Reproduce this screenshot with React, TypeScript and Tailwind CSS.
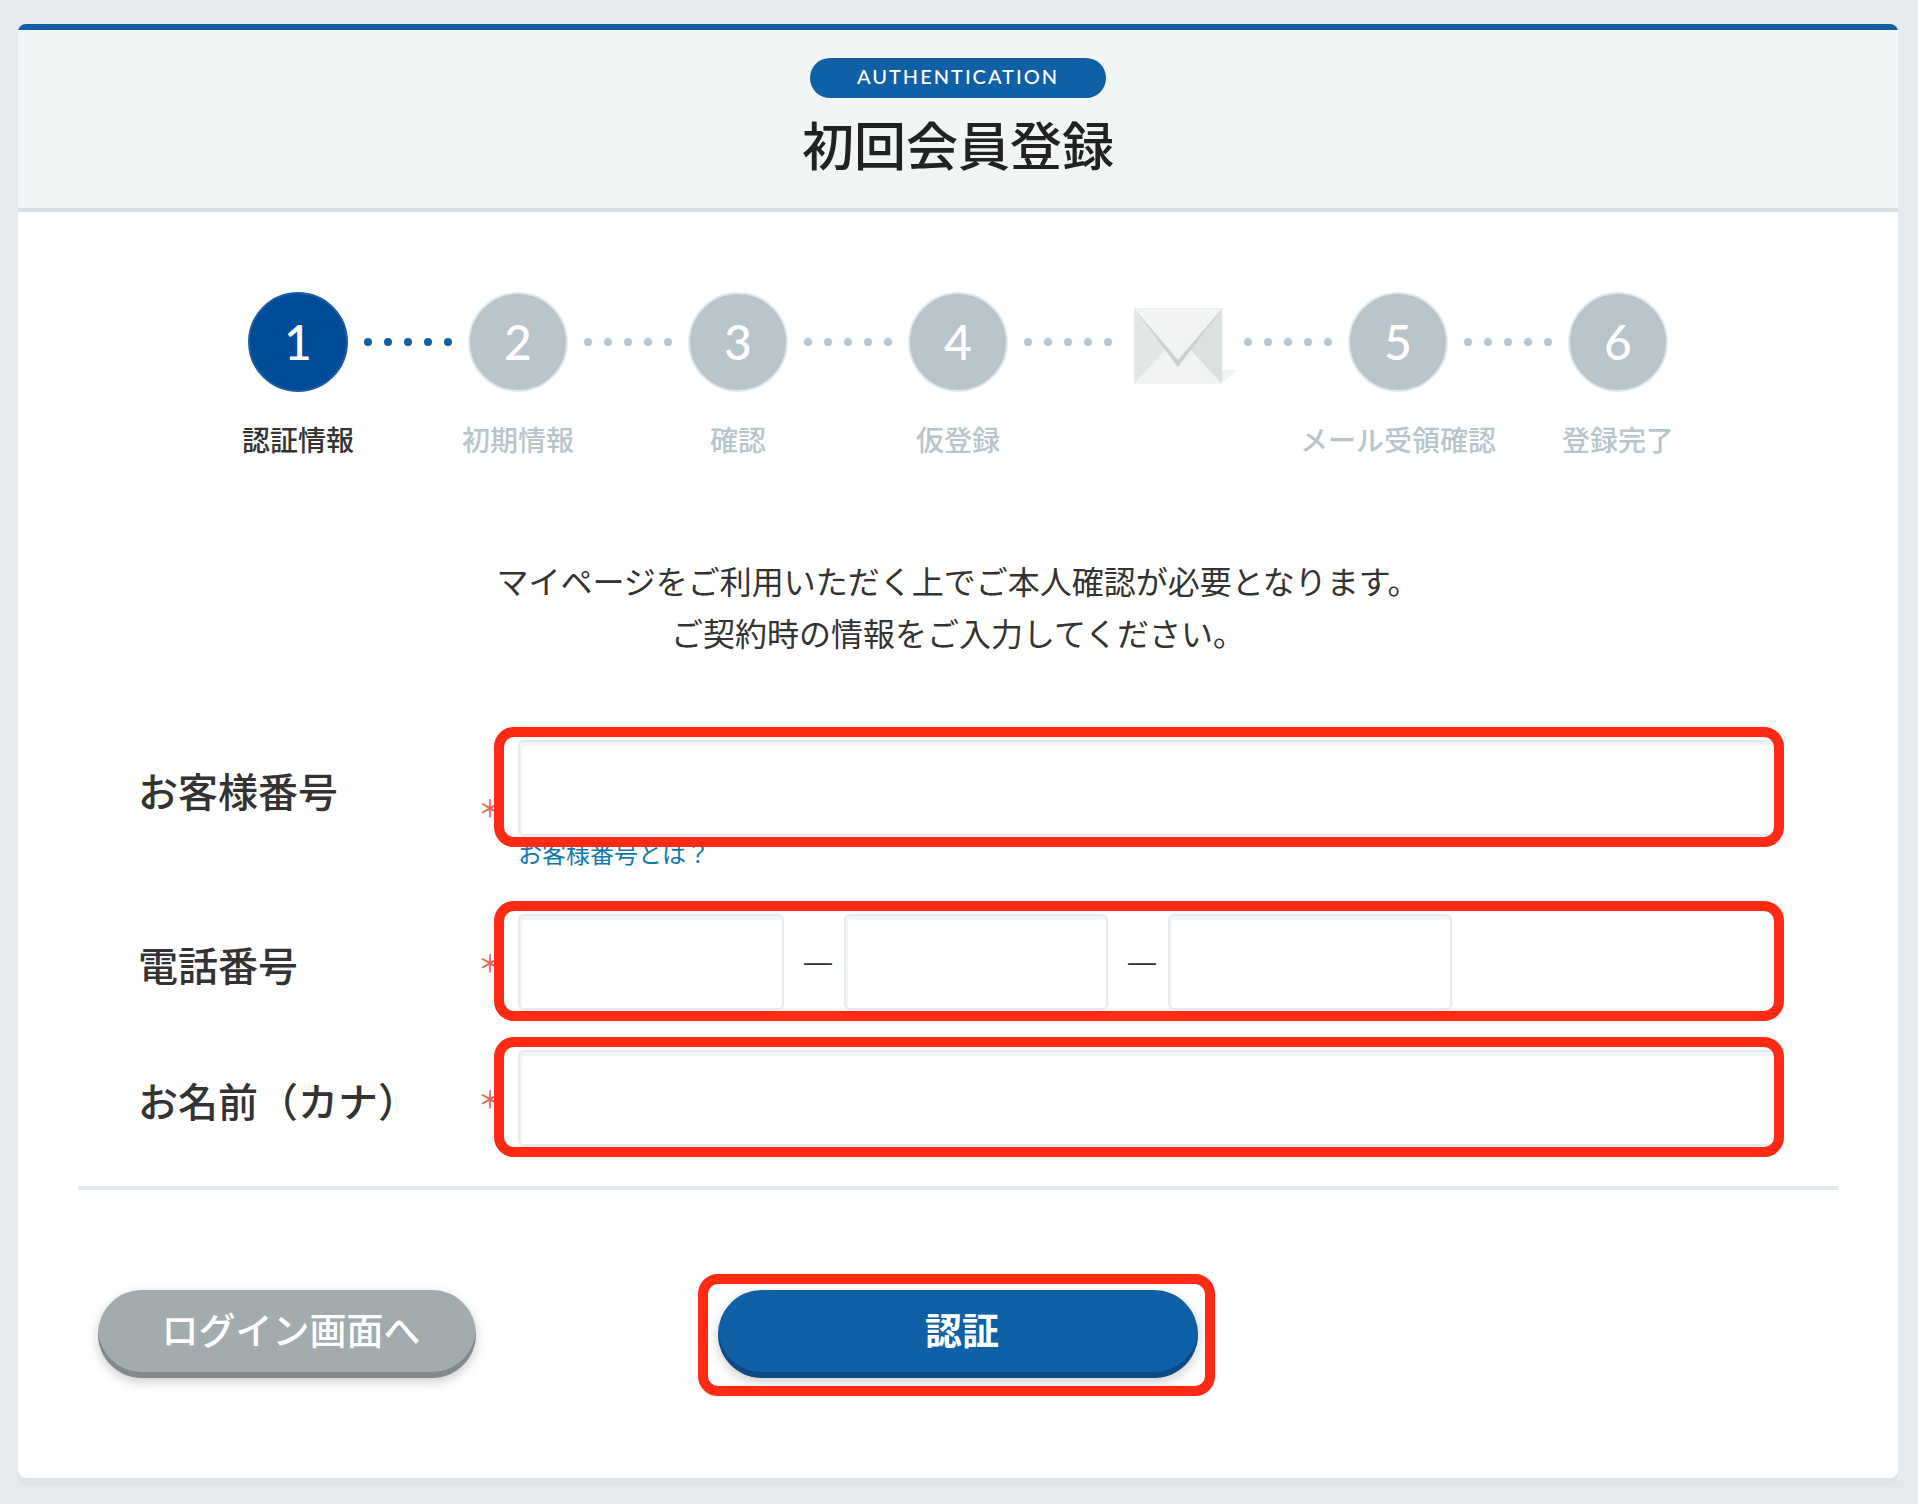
import { Fragment, type ReactNode } from "react";
import clsx from "clsx";

type Step = { num?: number; label?: string };

const steps: Step[] = [
  { num: 1, label: "認証情報" },
  { num: 2, label: "初期情報" },
  { num: 3, label: "確認" },
  { num: 4, label: "仮登録" },
  {}, // mail is sent between 4 and 5
  { num: 5, label: "メール受領確認" },
  { num: 6, label: "登録完了" },
];

const inputClass =
  "h-24 rounded-md border-2 border-[#e5eaee] bg-white px-5 text-[32px] shadow-[inset_2px_4px_0_#f3f5f7] outline-none";

function MailIcon() {
  return (
    <svg width="100" height="100" viewBox="0 0 100 100" className="overflow-visible" aria-hidden="true">
      <path d="M94 78h15L94 91z" fill="#f1f2f2" />
      <path d="M6 16.500 50 54 6 92z" fill="#e2e7e7" />
      <path d="M94 16.500 50 54 94 92z" fill="#dbe1e1" />
      <path d="M6 92 50 44 94 92z" fill="#f1f3f5" />
      <path d="M6 16.500 50 75 94 16.500z" fill="#cdd0d1" />
      <path d="M6 16.500 50 68 94 16.500z" fill="#f2f3f5" />
    </svg>
  );
}

function Dots({ active }: { active: boolean }) {
  return (
    <li aria-hidden="true" className="flex h-[100px] w-[120px] items-center justify-center gap-3">
      {[0, 1, 2, 3, 4].map((i) => (
        <span key={i} className={clsx("size-2 rounded-full", active ? "bg-[#1060a8]" : "bg-[#b4c6d3]")} />
      ))}
    </li>
  );
}

function StepItem({ step, current }: { step: Step; current: boolean }) {
  return (
    <li className="flex w-[100px] flex-col items-center" aria-current={current ? "step" : undefined}>
      {step.num ? (
        <span
          className={clsx(
            "flex size-[100px] items-center justify-center rounded-full border-2 font-[Lato,sans-serif] text-5xl font-medium text-white",
            current ? "border-[#1a5fa5] bg-[#004c98]" : "border-[#e2e9ec] bg-[#b8c5ca]"
          )}
        >
          {step.num}
        </span>
      ) : (
        <MailIcon />
      )}
      {step.label && (
        <span
          className={clsx(
            "mt-[26px] text-[28px] leading-[42px] font-medium whitespace-nowrap",
            current ? "text-[#333]" : "text-[#b8c5ca]"
          )}
        >
          {step.label}
        </span>
      )}
    </li>
  );
}

function Row({ id, label, note, children }: { id: string; label: string; note?: ReactNode; children: ReactNode }) {
  return (
    <div className="flex">
      <label htmlFor={id} className="flex h-24 w-[340px] items-center pt-1 text-[40px] leading-none font-medium">
        {label}
      </label>
      <span className="flex w-10 items-center text-2xl font-medium text-[#e8665c]">＊</span>
      <div className="flex-1">
        <div className="relative">
          {children}
          <div className="pointer-events-none absolute -top-[13px] -right-[6px] -bottom-[11px] -left-6 rounded-[20px] border-10 border-[#ff2a14]" />
        </div>
        {note}
      </div>
    </div>
  );
}

export default function App() {
  return (
    <div
      lang="ja"
      className="min-h-screen bg-[#e5eaee] pt-6 pr-5 pb-[26px] pl-[18px] font-['Noto_Sans_CJK_JP',sans-serif] text-[#333]"
    >
      <main className="overflow-hidden rounded-lg bg-white shadow-[0_8px_0_#e0e5e8]">
        <header className="flex flex-col items-center border-t-6 border-b-4 border-t-[#1060a8] border-b-[#d9dfe2] bg-[#f1f5f6] pt-7 pb-[26px]">
          <p className="flex h-10 w-[296px] items-center justify-center rounded-full bg-[#1060a8] pb-1 font-[Lato,sans-serif] text-xl font-medium tracking-[2px] text-white">
            AUTHENTICATION
          </p>
          <h1 className="mt-2 text-[52px] leading-[76px] font-medium text-[#222]">初回会員登録</h1>
        </header>

        <ol className="flex justify-center pt-20">
          {steps.map((step, i) => (
            <Fragment key={i}>
              {i > 0 && <Dots active={i === 1} />}
              <StepItem step={step} current={i === 0} />
            </Fragment>
          ))}
        </ol>

        <p className="mt-[94px] text-center text-[32px] leading-[52px]">
          マイページをご利用いただく上でご本人確認が必要となります。
          <br />
          ご契約時の情報をご入力してください。
        </p>

        <form className="mt-[82px]" onSubmit={(e) => e.preventDefault()}>
          <div className="mx-[60px] flex flex-col gap-10 border-b-4 border-[#e5eaee] px-[60px] pb-10">
            <Row
              id="customer-no"
              label="お客様番号"
              note={
                <a href="#customer-no" className="block pb-1 text-2xl leading-[34px] text-[#0f7ab0]">
                  お客様番号とは？
                </a>
              }
            >
              <input id="customer-no" type="text" className={clsx(inputClass, "block w-full")} />
            </Row>

            <Row id="tel-1" label="電話番号">
              <div className="flex items-center">
                <input id="tel-1" type="tel" className={clsx(inputClass, "w-[266px]")} />
                <span className="w-[60px] pl-5 font-['Liberation_Sans',sans-serif] text-[28px]">—</span>
                <input type="tel" aria-label="電話番号 2" className={clsx(inputClass, "w-[264px]")} />
                <span className="w-[60px] pl-5 font-['Liberation_Sans',sans-serif] text-[28px]">—</span>
                <input type="tel" aria-label="電話番号 3" className={clsx(inputClass, "w-[284px]")} />
              </div>
            </Row>

            <Row id="kana" label="お名前（カナ）">
              <input id="kana" type="text" className={clsx(inputClass, "block w-full")} />
            </Row>
          </div>

          <div className="grid grid-cols-[1fr_480px_1fr] px-20 py-[100px]">
            <button
              type="button"
              className="h-[88px] w-[378px] rounded-full bg-[#a2abad] pb-[10px] pl-2 text-[37px] leading-none font-medium text-white shadow-[inset_0_-6px_0_#828a8c,0_4px_12px_rgba(0,0,0,0.2)]"
            >
              ログイン画面へ
            </button>
            <div className="relative">
              <button
                type="submit"
                className="h-[88px] w-full rounded-full bg-[#1060a8] pb-[10px] pl-2 text-[37px] leading-none font-bold text-white shadow-[inset_0_-6px_0_#0e4a85,0_4px_12px_rgba(0,0,0,0.2)]"
              >
                認証
              </button>
              <div className="pointer-events-none absolute -top-4 -right-[17px] -bottom-[18px] -left-5 rounded-[20px] border-10 border-[#ff2a14]" />
            </div>
          </div>
        </form>
      </main>
    </div>
  );
}
